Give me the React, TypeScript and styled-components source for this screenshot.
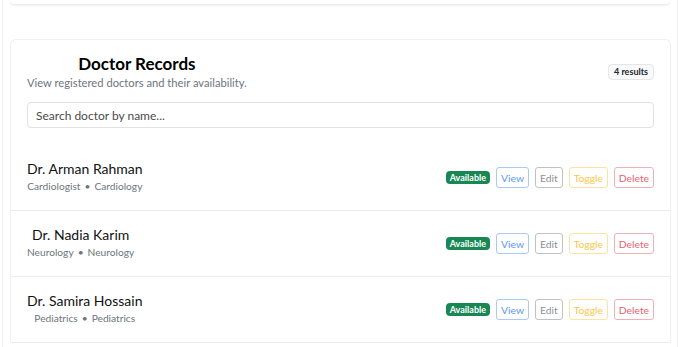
import React from "react";
import styled, { createGlobalStyle } from "styled-components";

const doctors = [
  { name: "Dr. Arman Rahman", title: "Cardiologist", dept: "Cardiology" },
  { name: "Dr. Nadia Karim", title: "Neurology", dept: "Neurology" },
  { name: "Dr. Samira Hossain", title: "Pediatrics", dept: "Pediatrics" },
];

const actions = [
  { label: "View", text: "#5b96f7", border: "#a9c8fb" },
  { label: "Edit", text: "#8c9196", border: "#bfc2c5" },
  { label: "Toggle", text: "#fbc64a", border: "#fde3a0" },
  { label: "Delete", text: "#e26470", border: "#efb0b6" },
];

const GlobalStyle = createGlobalStyle`
  body {
    margin: 0;
    background: #fff;
    font-family: "Lato", "Noto Sans", sans-serif;
    color: #212529;
    overflow: hidden;
  }
`;

const Page = styled.div`
  margin: 0 2px;
  padding: 0 6px;
  min-height: 347px;
  border-left: 1px solid #efefef;
  border-right: 1px solid #efefef;
`;

const TopCard = styled.div`
  height: 4px;
  margin: 0 1px;
  border-radius: 0 0 6px 6px;
  background: #fff;
  box-shadow: 0 1px 3px rgba(0, 0, 0, 0.12);
`;

const RecordsCard = styled.div`
  margin: 35px 0 0 1px;
  border: 1px solid #f1f1f1;
  border-bottom: none;
  border-radius: 6px 6px 0 0;
`;

const Header = styled.div`
  padding: 12px 16px 17px 16px;
`;

const HeaderTop = styled.div`
  display: flex;
  justify-content: space-between;
  align-items: center;
`;

const TitleBlock = styled.div`
  text-align: center;
`;

const Title = styled.div`
  font-size: 17px;
  font-weight: 700;
  line-height: 23px;
  color: #000;
`;

const Subtitle = styled.div`
  font-size: 11.2px;
  line-height: 16px;
  color: #6c757d;
`;

const CountBadge = styled.span`
  font-size: 9px;
  font-weight: 700;
  line-height: 12px;
  padding: 1px 5px;
  border: 1px solid #e6e6e6;
  border-radius: 4px;
  background: #f8f9fa;
  color: #212529;
`;

const SearchInput = styled.input`
  display: block;
  box-sizing: border-box;
  width: 100%;
  height: 26px;
  margin-top: 11px;
  padding: 0 8px;
  font-family: inherit;
  font-size: 12px;
  color: #212529;
  border: 1px solid #e2e2e2;
  border-radius: 4px;
  outline: none;
  &::placeholder {
    color: #4a4a4a;
  }
`;

const Row = styled.div`
  display: flex;
  align-items: center;
  justify-content: space-between;
  height: 65px;
  padding: 0 16px;
  border-bottom: 1px solid #ececec;
`;

const DoctorInfo = styled.div`
  text-align: center;
  margin-top: -3px;
`;

const DoctorName = styled.div`
  font-size: 14px;
  line-height: 19px;
  color: #111;
`;

const DoctorMeta = styled.div`
  margin-top: 1px;
  font-size: 10.2px;
  line-height: 14px;
  color: #6c757d;
`;

const Dot = styled.span`
  margin: 0 4px;
`;

const Actions = styled.div`
  display: flex;
  align-items: center;
  gap: 6px;
`;

const StatusBadge = styled.span`
  font-size: 9px;
  font-weight: 700;
  line-height: 13px;
  padding: 0 4px;
  border-radius: 4px;
  background: #198754;
  color: #fff;
`;

const ActionButton = styled.button<{ $text: string; $border: string }>`
  height: 21px;
  padding: 0 4px;
  font-family: inherit;
  font-size: 10.3px;
  color: ${(p) => p.$text};
  background: #fff;
  border: 1px solid ${(p) => p.$border};
  border-radius: 3px;
`;

export default function App() {
  return (
    <>
      <GlobalStyle />
      <Page>
        <TopCard />
        <RecordsCard>
          <Header>
            <HeaderTop>
              <TitleBlock>
                <Title>Doctor Records</Title>
                <Subtitle>View registered doctors and their availability.</Subtitle>
              </TitleBlock>
              <CountBadge>4 results</CountBadge>
            </HeaderTop>
            <SearchInput placeholder="Search doctor by name..." />
          </Header>
          {doctors.map((d) => (
            <Row key={d.name}>
              <DoctorInfo>
                <DoctorName>{d.name}</DoctorName>
                <DoctorMeta>
                  {d.title}
                  <Dot>•</Dot>
                  {d.dept}
                </DoctorMeta>
              </DoctorInfo>
              <Actions>
                <StatusBadge>Available</StatusBadge>
                {actions.map((a) => (
                  <ActionButton key={a.label} $text={a.text} $border={a.border}>
                    {a.label}
                  </ActionButton>
                ))}
              </Actions>
            </Row>
          ))}
        </RecordsCard>
      </Page>
    </>
  );
}
